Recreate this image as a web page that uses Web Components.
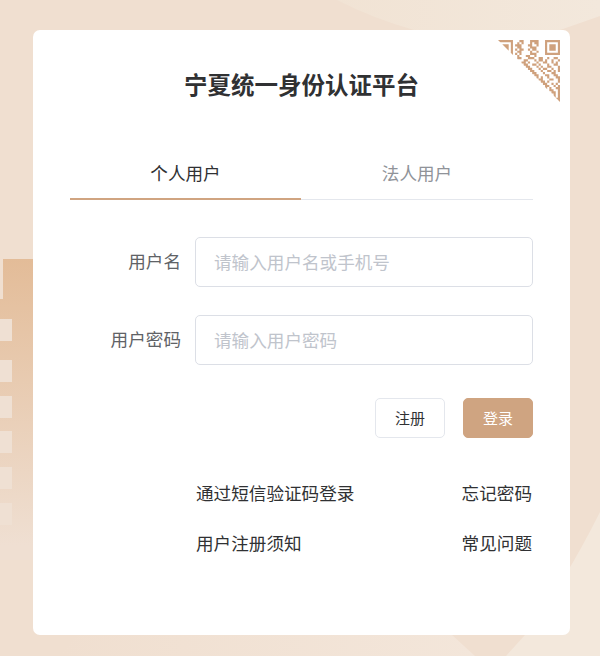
<!DOCTYPE html>
<html lang="zh-CN">
<head>
<meta charset="utf-8">
<title>宁夏统一身份认证平台</title>
<style>
html,body{margin:0;padding:0;background:#f0dfd0;}
body{font-family:"Noto Sans CJK SC","Liberation Sans",sans-serif;}
</style>
</head>
<body>
<login-page>
  <login-card>
    <qr-corner slot="corner"></qr-corner>
    <span slot="title">宁夏统一身份认证平台</span>
    <login-tabs>
      <tab-item active>个人用户</tab-item>
      <tab-item>法人用户</tab-item>
    </login-tabs>
    <form-field label="用户名" placeholder="请输入用户名或手机号"></form-field>
    <form-field label="用户密码" placeholder="请输入用户密码" type="password"></form-field>
    <action-row>
      <ui-button>注册</ui-button>
      <ui-button primary>登录</ui-button>
    </action-row>
    <link-row><span>通过短信验证码登录</span><span slot="end">忘记密码</span></link-row>
    <link-row><span>用户注册须知</span><span slot="end">常见问题</span></link-row>
  </login-card>
</login-page>
<script>
function def(name, css, html, extra){
  const T = class extends HTMLElement{
    constructor(){super();const r=this.attachShadow({mode:'open'});r.innerHTML='<style>'+css+'</style>'+html;}
    connectedCallback(){ if(extra) extra(this); }
  };
  customElements.define(name,T);
}
def('login-page',`
:host{display:block;position:relative;width:600px;height:656px;overflow:hidden;background:#f0dfd0;}
.bg{position:absolute;left:0;top:0;width:600px;height:656px;}
.wrap{position:relative;display:flex;padding:30px 30px 21px 33px;box-sizing:border-box;height:656px;}
`,`
<svg class="bg" viewBox="0 0 600 656" aria-hidden="true">
<defs>
<linearGradient id="b" x1="0" y1="259" x2="0" y2="545" gradientUnits="userSpaceOnUse"><stop offset="0" stop-color="#e3bc98"/><stop offset="1" stop-color="#efdfd2"/></linearGradient>
<linearGradient id="l" x1="60" y1="0" x2="600" y2="0" gradientUnits="userSpaceOnUse"><stop offset="0" stop-color="#f0dfd0"/><stop offset="1" stop-color="#f4e8dd"/></linearGradient>
<linearGradient id="t" x1="330" y1="0" x2="600" y2="0" gradientUnits="userSpaceOnUse"><stop offset="0" stop-color="#f1e3d4"/><stop offset="1" stop-color="#f3e8dc"/></linearGradient>
</defs>
<path d="M337 0 Q372 18 414 30 L560 30 L600 16 L600 0Z" fill="url(#t)"/>
<path d="M77 635 L452 635 L475 656 L57 656Z" fill="url(#l)"/>
<path d="M506 656 L525 635 Q565 582 600 512 L600 656Z" fill="#f3e8dc"/>
<path d="M3 259 H40 V560 H0 V299 H3Z" fill="url(#b)"/>
<g fill="#efe0d3">
<rect x="0" y="319" width="12" height="22"/><rect x="0" y="360" width="12" height="22"/><rect x="0" y="396" width="12" height="22"/><rect x="0" y="431" width="12" height="22"/><rect x="0" y="467" width="12" height="22"/><rect x="0" y="503" width="12" height="22"/>
</g>
</svg>
<div class="wrap"><slot></slot></div>`);

def('login-card',`
:host{display:block;position:relative;width:537px;height:605px;box-sizing:border-box;background:#fff;border-radius:7px;padding:0 37px 0 37px;}
h1{margin:0;padding:38px 0 0;height:88px;box-sizing:border-box;font-size:23.5px;line-height:32px;font-weight:700;color:#303133;text-align:center;letter-spacing:0;}
.corner{position:absolute;right:10px;top:10px;}
.body{padding-top:26px;}
`,`
<div class="corner"><slot name="corner"></slot></div>
<h1><slot name="title"></slot></h1>
<div class="body"><slot></slot></div>`);

def('qr-corner',`
:host{display:block;width:62px;height:62px;}
svg{display:block;width:62px;height:62px;filter:blur(.25px);}
`,`<svg viewBox="0 0 29 29" aria-hidden="true"><defs><clipPath id="c"><path d="M0 0H29V29Z"/></clipPath></defs><g clip-path="url(#c)" fill="#cfa17d"><path id="p" d=""/></g></svg>`,
(el)=>{
  const rows=[
  "11111110001100011110001111111",
  "10000010010100010110001000001",
  "10111010111000110010001011101",
  "10111010011000011100001011101",
  "10111010101100101100001011101",
  "10000010011000010010001000001",
  "11111110101000011100001111111",
  "00000000010001100100000000000",
  "00000000011000111001100100110",
  "00000000000011000101101001001",
  "00000000000110100010011001010",
  "00000000000011001101000100110",
  "00000000000001100010100110001",
  "00000000000000110001011001001",
  "00000000000000011000100110101",
  "00000000000000001100010001100",
  "00000000000000000110001100110",
  "00000000000000000010100100011",
  "00000000000000000001100011001",
  "00000000000000000000110100001",
  "00000000000000000000011001010",
  "00000000000000000000001100101",
  "00000000000000000000001010011",
  "00000000000000000000000011001",
  "00000000000000000000000001101",
  "00000000000000000000000000101",
  "00000000000000000000000000101",
  "00000000000000000000000000011",
  "00000000000000000000000000001"];
  let d='';
  rows.forEach((r,y)=>{[...r].forEach((c,x)=>{if(c==='1')d+='M'+x+' '+y+'h1v1h-1z';});});
  el.shadowRoot.getElementById('p').setAttribute('d',d);
});

def('login-tabs',`
:host{display:grid;grid-template-columns:231px 1fr;border-bottom:1px solid #e4e7ed;height:55px;box-sizing:content-box;margin-bottom:37px;}
`,`<slot></slot>`);

def('tab-item',`
:host{display:flex;justify-content:center;align-items:center;box-sizing:border-box;height:56px;margin-bottom:-1px;padding-top:1px;font-size:17.6px;color:#909399;cursor:pointer;}
:host([active]){color:#303133;border-bottom:2px solid #d0a481;padding-top:2px;}
`,`<slot></slot>`);

def('form-field',`
:host{display:flex;align-items:center;height:50px;margin-bottom:28px;}
label{width:125px;padding:0 14px 3px 0;box-sizing:border-box;text-align:right;font-size:17.6px;color:#606266;white-space:nowrap;flex:none;}
input{flex:1;min-width:0;height:50px;box-sizing:border-box;border:1px solid #dcdfe6;border-radius:5px;padding:0 18px 2px;font:inherit;font-size:17.6px;color:#606266;background:#fff;outline:none;margin:0;}
input::placeholder{color:#c0c4cc;opacity:1;}
`,`<label></label><input>`,(el)=>{
  const r=el.shadowRoot;
  r.querySelector('label').textContent=el.getAttribute('label');
  const i=r.querySelector('input');
  i.placeholder=el.getAttribute('placeholder');
  i.type=el.getAttribute('type')||'text';
});

def('action-row',`
:host{display:flex;justify-content:flex-end;gap:18px;margin-top:33px;margin-bottom:36px;}
`,`<slot></slot>`);

def('ui-button',`
:host{display:flex;align-items:center;justify-content:center;width:70px;height:40px;box-sizing:border-box;border:1px solid #e4e7ed;border-radius:5px;padding-bottom:2px;background:#fff;color:#303133;font-size:15px;cursor:pointer;}
:host([primary]){background:#cfa481;border-color:#cfa481;color:#fff;}
`,`<slot></slot>`);

def('link-row',`
:host{display:flex;justify-content:space-between;box-sizing:border-box;height:40px;align-items:center;margin-bottom:10px;padding:0 1px 4px 126px;font-size:17.6px;color:#303133;cursor:pointer;}
`,`<slot></slot><slot name="end"></slot>`);
</script>
</body>
</html>
